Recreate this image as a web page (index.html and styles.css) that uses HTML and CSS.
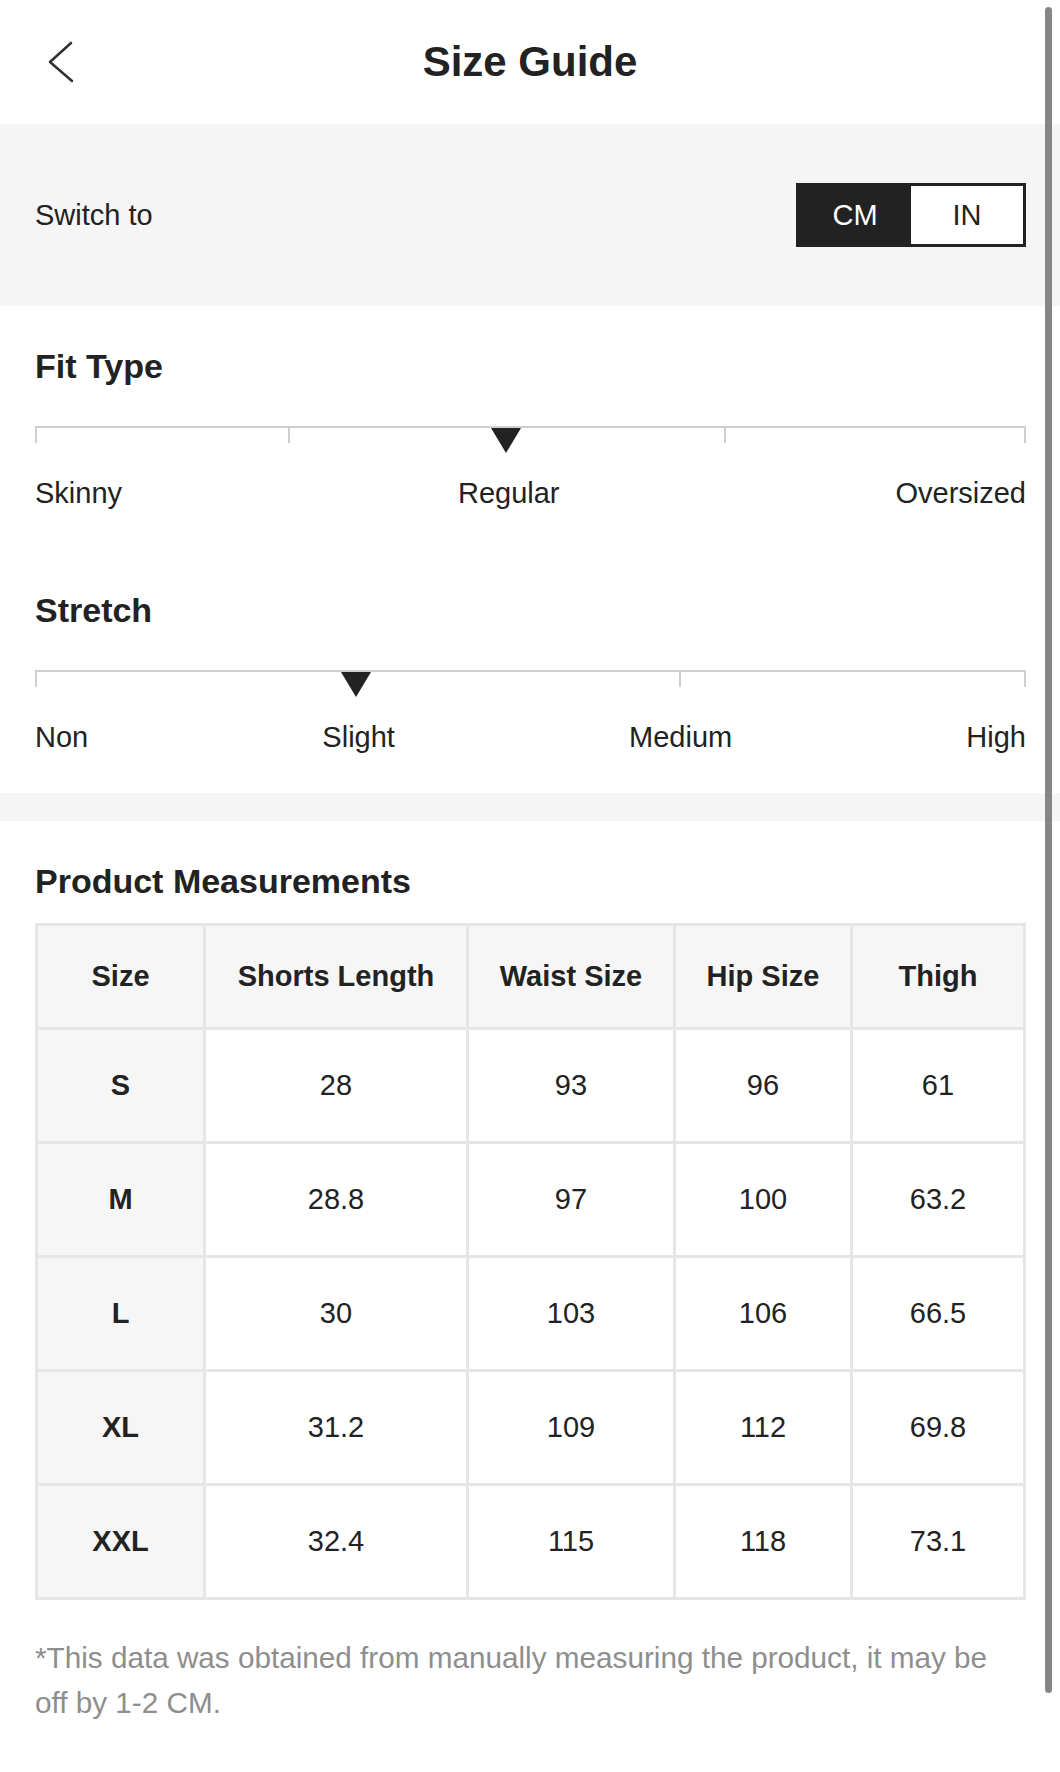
FILE: index.html
```html
<!DOCTYPE html>
<html lang="en">
<head>
<meta charset="utf-8">
<title>Size Guide</title>
<link rel="stylesheet" href="styles.css">
</head>
<body>
<div class="page">
  <header class="topbar">
    <svg class="back" viewBox="0 0 28 44" aria-hidden="true">
      <polyline points="23,3 2,22 24,41" fill="none" stroke="#333" stroke-width="2.6" stroke-linecap="round" stroke-linejoin="round"/>
    </svg>
    <h1 class="title">Size Guide</h1>
    <span></span>
  </header>

  <section class="units">
    <span class="units-label">Switch to</span>
    <div class="toggle">
      <span class="seg active">CM</span>
      <span class="seg">IN</span>
    </div>
  </section>

  <section class="fit">
    <h2 class="sec-title">Fit Type</h2>
    <div class="scale">
      <div class="track">
        <span class="tick" style="left:0px"></span>
        <span class="tick" style="left:253px"></span>
        <span class="tick" style="left:689px"></span>
        <span class="tick" style="left:989px"></span>
        <span class="marker" style="left:471px"></span>
      </div>
      <div class="labels">
        <span>Skinny</span><span>Regular</span><span>Oversized</span>
      </div>
    </div>

    <h2 class="sec-title stretch-title">Stretch</h2>
    <div class="scale">
      <div class="track">
        <span class="tick" style="left:0px"></span>
        <span class="tick" style="left:644px"></span>
        <span class="tick" style="left:989px"></span>
        <span class="marker" style="left:321px"></span>
      </div>
      <div class="labels">
        <span>Non</span><span>Slight</span><span>Medium</span><span>High</span>
      </div>
    </div>
  </section>

  <div class="spacer"></div>

  <section class="measure">
    <h2 class="sec-title">Product Measurements</h2>
    <table class="grid">
      <thead>
        <tr class="head">
          <th class="c1">Size</th>
          <th class="c2">Shorts Length</th>
          <th class="c3">Waist Size</th>
          <th class="c4">Hip Size</th>
          <th class="c5">Thigh</th>
        </tr>
      </thead>
      <tbody>
        <tr><th>S</th><td>28</td><td>93</td><td>96</td><td>61</td></tr>
        <tr><th>M</th><td>28.8</td><td>97</td><td>100</td><td>63.2</td></tr>
        <tr><th>L</th><td>30</td><td>103</td><td>106</td><td>66.5</td></tr>
        <tr><th>XL</th><td>31.2</td><td>109</td><td>112</td><td>69.8</td></tr>
        <tr><th>XXL</th><td>32.4</td><td>115</td><td>118</td><td>73.1</td></tr>
      </tbody>
    </table>
    <p class="note">*This data was obtained from manually measuring the product, it may be<br>off by 1-2 CM.</p>
  </section>

  <div class="scrollbar"></div>
</div>
</body>
</html>
```

FILE: styles.css
```css
* { box-sizing: border-box; }

body {
  margin: 0;
  background: #fff;
  color: #222;
  font-family: "Liberation Sans", Arial, Helvetica, sans-serif;
}

.page {
  position: relative;
  width: 1060px;
  min-height: 1772px;
}

/* top bar */
.topbar {
  height: 124px;
  display: grid;
  grid-template-columns: 1fr auto 1fr;
  align-items: center;
}
.back { width: 28px; height: 44px; display: block; margin-left: 48px; }
.title {
  margin: 0;
  font-size: 42px;
  font-weight: 700;
  line-height: 48px;
  color: #222;
}

/* unit switch */
.units {
  height: 182px;
  background: #f5f5f5;
  display: flex;
  justify-content: space-between;
  align-items: center;
  padding: 0 34px 0 35px;
}
.units-label { font-size: 29px; }
.toggle {
  display: flex;
  width: 230px;
  height: 64px;
  border: 3px solid #222;
  background: #fff;
}
.seg {
  flex: 1;
  display: flex;
  align-items: center;
  justify-content: center;
  font-size: 29px;
  color: #222;
}
.seg.active { background: #222; color: #fff; }

/* fit & stretch */
.fit { padding: 40px 34px 39px 35px; }
.sec-title {
  margin: 0;
  font-size: 34px;
  font-weight: 700;
  line-height: 40px;
  color: #222;
}
.stretch-title { margin-top: 80px; }
.scale { margin-top: 40px; }
.track {
  position: relative;
  height: 50px;
  border-top: 2px solid #cfcfcf;
}
.tick {
  position: absolute;
  top: -2px;
  width: 2px;
  height: 17px;
  background: #cfcfcf;
}
.marker {
  position: absolute;
  top: 0;
  width: 0;
  height: 0;
  border-left: 15px solid transparent;
  border-right: 15px solid transparent;
  border-top: 25px solid #222;
  transform: translateX(-50%);
}
.labels {
  display: flex;
  justify-content: space-between;
  font-size: 29px;
  line-height: 34px;
}

.spacer { height: 28px; background: #f5f5f5; }

/* measurements */
.measure { padding: 40px 34px 0 35px; }
.grid {
  margin-top: 22px;
  width: 991px;
  table-layout: fixed;
  border-collapse: separate;
  border-spacing: 0;
  border-top: 3px solid #e6e6e6;
  border-left: 3px solid #e6e6e6;
}
.grid th, .grid td {
  padding: 0;
  text-align: center;
  vertical-align: middle;
  font-size: 29px;
  border-right: 3px solid #e6e6e6;
  border-bottom: 3px solid #e6e6e6;
}
.grid tr { height: 114px; }
.grid tr.head { height: 104px; }
.grid th { font-weight: 700; background: #f6f6f6; }
.grid td { font-weight: 400; background: #fff; }
.c1 { width: 168px; }
.c2 { width: 263px; }
.c3 { width: 207px; }
.c4 { width: 177px; }
.c5 { width: 173px; }

.note {
  margin: 35px 0 0;
  font-size: 29.7px;
  line-height: 45px;
  color: #8e8e8e;
}

.scrollbar {
  position: absolute;
  top: 7px;
  left: 1045px;
  width: 7px;
  height: 1686px;
  border-radius: 4px;
  background: #868686;
}
```
